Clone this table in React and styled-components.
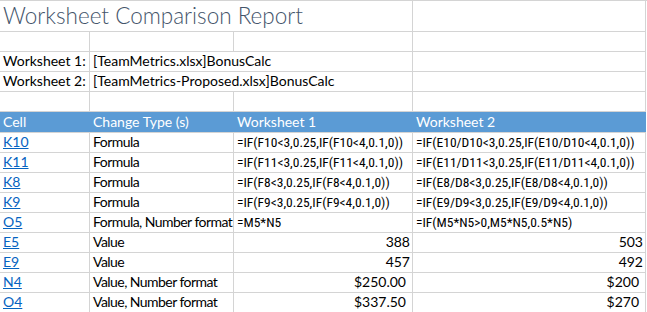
import styled, { createGlobalStyle } from 'styled-components'

const GlobalStyle = createGlobalStyle`
  html, body {
    margin: 0;
    padding: 0;
    background: #ffffff;
    overflow: hidden;
  }
`

const info = [
  { label: 'Worksheet 1:', value: '[TeamMetrics.xlsx]BonusCalc' },
  { label: 'Worksheet 2:', value: '[TeamMetrics-Proposed.xlsx]BonusCalc' },
]

const rows = [
  { cell: 'K10', type: 'Formula', a: '=IF(F10<3,0.25,IF(F10<4,0.1,0))', b: '=IF(E10/D10<3,0.25,IF(E10/D10<4,0.1,0))' },
  { cell: 'K11', type: 'Formula', a: '=IF(F11<3,0.25,IF(F11<4,0.1,0))', b: '=IF(E11/D11<3,0.25,IF(E11/D11<4,0.1,0))' },
  { cell: 'K8', type: 'Formula', a: '=IF(F8<3,0.25,IF(F8<4,0.1,0))', b: '=IF(E8/D8<3,0.25,IF(E8/D8<4,0.1,0))' },
  { cell: 'K9', type: 'Formula', a: '=IF(F9<3,0.25,IF(F9<4,0.1,0))', b: '=IF(E9/D9<3,0.25,IF(E9/D9<4,0.1,0))' },
  { cell: 'O5', type: 'Formula, Number format', a: '=M5*N5', b: '=IF(M5*N5>0,M5*N5,0.5*N5)' },
  { cell: 'E5', type: 'Value', a: '388', b: '503', num: true },
  { cell: 'E9', type: 'Value', a: '457', b: '492', num: true },
  { cell: 'N4', type: 'Value, Number format', a: '$250.00', b: '$200', num: true, money: true },
  { cell: 'O4', type: 'Value, Number format', a: '$337.50', b: '$270', num: true, money: true },
]

const App = () => {
  return (
    <>
      <GlobalStyle />
      <Sheet>
        <Cell $span={3} $tall>
          <Title>Worksheet Comparison Report</Title>
        </Cell>
        <Cell $tall />

        <Cell /><Cell /><Cell /><Cell />

        {info.map((r) => (
          <Row key={r.label}>
            <Cell>{r.label}</Cell>
            <Cell $span={2}>{r.value}</Cell>
            <Cell />
          </Row>
        ))}

        <Cell /><Cell /><Cell /><Cell />

        <HeaderRow>
          <HeadCell>Cell</HeadCell>
          <HeadCell>Change Type (s)</HeadCell>
          <HeadCell>Worksheet 1</HeadCell>
          <HeadCell>Worksheet 2</HeadCell>
        </HeaderRow>

        {rows.map((r) => (
          <Row key={r.cell}>
            <Cell><CellLink href="#">{r.cell}</CellLink></Cell>
            <Cell $tight>{r.type}</Cell>
            <Cell $right={r.num} $money={r.money} $formula={!r.num}>{r.a}</Cell>
            <Cell $right={r.num} $money={r.money} $formula={!r.num}>{r.b}</Cell>
          </Row>
        ))}
      </Sheet>
    </>
  )
}
export default App

const Sheet = styled.div`
    display: grid;
    grid-template-columns: 90px 144px 179px 233px;
    border-top: 1px solid #d4d4d4;
    font-family: Lato, "Open Sans", sans-serif;
    font-size: 14px;
    color: #000000;
`

const Row = styled.div`
    display: contents;
`

const Cell = styled.div`
    grid-column: span ${({ $span }) => $span || 1};
    box-sizing: border-box;
    height: ${({ $tall }) => ($tall ? '31px' : '20px')};
    border-right: 1px solid #d4d4d4;
    border-bottom: 1px solid #d4d4d4;
    padding: 0 ${({ $money }) => ($money ? '6px' : '2px')} 2px 3px;
    display: flex;
    align-items: flex-end;
    justify-content: ${({ $right }) => ($right ? 'flex-end' : 'flex-start')};
    white-space: nowrap;
    line-height: 16px;
    letter-spacing: ${({ $tight }) => ($tight ? '-0.55px' : 'normal')};
    font-family: ${({ $formula }) => ($formula ? '"Roboto Condensed", Lato, sans-serif' : 'inherit')};
    font-size: ${({ $formula }) => ($formula ? '13.5px' : 'inherit')};
`

const Title = styled.span`
    font-size: 22.5px;
    font-weight: 300;
    color: #44546a;
    line-height: 26px;
`

const HeaderRow = styled.div`
    grid-column: 1 / -1;
    display: grid;
    grid-template-columns: 90px 144px 179px 233px;
    height: 20px;
    background: #5b9bd5;
    border-bottom: 1px solid #d4d4d4;
`

const HeadCell = styled.div`
    color: #ffffff;
    padding: 0 3px 2px;
    display: flex;
    align-items: flex-end;
    line-height: 16px;
    white-space: nowrap;
`

const CellLink = styled.a`
    color: #0563c1;
    text-decoration: underline;
`
